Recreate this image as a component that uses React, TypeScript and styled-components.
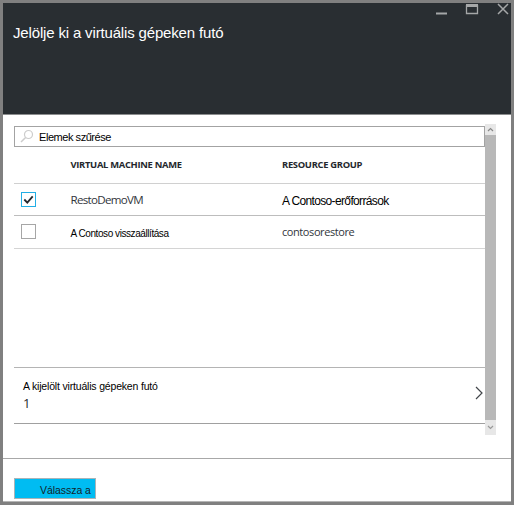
import React from 'react';
import styled, { createGlobalStyle, css } from 'styled-components';

const GlobalStyle = createGlobalStyle`
  *, *::before, *::after { box-sizing: border-box; }
  body { margin: 0; background: #fff; overflow: hidden; }
`;

const sans = '"Liberation Sans", Arial, sans-serif';
const humanist = '"Open Sans", "Noto Sans", sans-serif';

const Blade = styled.section`
  display: flex;
  flex-direction: column;
  width: 514px;
  height: 505px;
  border: 3px solid #808080;
  background: #fff;
`;

const Header = styled.header`
  display: flex;
  flex-direction: column;
  height: 112px;
  flex: none;
  background: #292e32;
  border-bottom: 1px solid #8b8d8e;
`;

const WindowControls = styled.div`
  display: flex;
  justify-content: flex-end;
  height: 16px;
  gap: 18px;
  padding-right: 2px;
  svg { display: block; }
`;

const Title = styled.h1`
  margin: 4px 0 0 10px;
  font: 400 15px/20px ${sans};
  letter-spacing: -0.16px;
  color: #fff;
  white-space: nowrap;
`;

const Body = styled.main`
  display: flex;
  height: 344px;
  flex: none;
  padding: 9px 15px 23px 11px;
  border-bottom: 1px solid #a8a8a8;
`;

const Content = styled.div`
  display: flex;
  flex-direction: column;
  flex: 1;
  padding-top: 2px;
`;

const SearchBox = styled.div`
  display: flex;
  align-items: center;
  flex: none;
  height: 21px;
  padding-left: 5px;
  border: 1px solid #a3a3a3;
`;

type TextProps = { $size: number; $spacing?: number; $humanist?: boolean; $shift?: number };

const Text = styled.span<TextProps>`
  display: block;
  font-family: ${p => (p.$humanist ? humanist : sans)};
  font-size: ${p => p.$size}px;
  line-height: 16px;
  letter-spacing: ${p => p.$spacing ?? 0}px;
  padding-top: ${p => p.$shift ?? 0}px;
  color: ${p => (p.$humanist ? '#32363c' : '#000')};
  white-space: nowrap;
`;

const SearchHint = styled(Text)`
  margin-left: 5px;
`;

const Count = styled(Text)`
  color: #24272d;
`;

const gridRow = css`
  display: grid;
  grid-template-columns: 56.5px 211.5px 1fr;
  align-items: center;
  flex: none;
`;

const HeadRow = styled.div`
  ${gridRow}
  height: 37px;
  border-bottom: 1px solid #d0d0d0;
  font: 700 9.4px/16px ${humanist};
  letter-spacing: -0.3px;
  color: #24272d;
  white-space: nowrap;
`;

const Row = styled.div<{ $height: number; $line: string }>`
  ${gridRow}
  height: ${p => p.$height}px;
  border-bottom: 1px solid ${p => p.$line};
`;

const CheckBox = styled.span<{ $on?: boolean }>`
  display: block;
  width: 15px;
  height: 15px;
  margin-left: 7px;
  margin-bottom: ${p => (p.$on ? 0 : 2)}px;
  border: 1px solid ${p => (p.$on ? '#22aee5' : '#a6a6a6')};
  svg { display: block; }
`;

const Summary = styled.div`
  display: flex;
  justify-content: space-between;
  flex: none;
  height: 57px;
  margin-top: 118px;
  padding: 10px 2px 0 9px;
  border-top: 1px solid #b4b4b4;
  border-bottom: 1px solid #a0a0a0;
  svg { display: block; margin-top: 8px; }
`;

const ScrollBar = styled.div`
  display: flex;
  flex-direction: column;
  flex: none;
  width: 11px;
  background: #b8b8b8;
`;

const ScrollButton = styled.div<{ $height: number }>`
  display: flex;
  align-items: center;
  justify-content: center;
  height: ${p => p.$height}px;
  background: #e7e7e7;
`;

const ScrollThumb = styled.div`
  flex: 1;
`;

const Footer = styled.footer`
  flex: 1;
  padding: 19px 0 0 11px;
  border-bottom: 1px solid #b5b5b5;
`;

const SelectButton = styled.button`
  display: block;
  width: 82px;
  height: 21px;
  margin: 0;
  padding: 3px 0 0 25px;
  border: 1px solid #a9b4b8;
  background: #00bcf2;
  font: 400 10.5px/16px ${sans};
  letter-spacing: -0.05px;
  color: #12242c;
  text-align: left;
  white-space: nowrap;
`;

export default function App() {
  return (
    <>
      <GlobalStyle />
      <Blade>
        <Header>
          <WindowControls>
            <svg width="12" height="14" viewBox="0 0 12 14"><path d="M1 10.5h11" stroke="#a5a7a8" strokeWidth="2" /></svg>
            <svg width="14" height="14" viewBox="0 0 14 14"><path d="M1.5 2v8.5h11V2" fill="none" stroke="#a5a7a8" strokeWidth="1.3" /><path d="M1 2.5h12" stroke="#a5a7a8" strokeWidth="3" /></svg>
            <svg width="12" height="14" viewBox="0 0 12 14"><path d="M1 1l10 10M11 1L1 11" stroke="#a5a7a8" strokeWidth="1.5" /></svg>
          </WindowControls>
          <Title>Jelölje ki a virtuális gépeken futó</Title>
        </Header>
        <Body>
          <Content>
            <SearchBox>
              <svg width="14" height="15" viewBox="0 0 14 15"><circle cx="8.5" cy="5.5" r="4" fill="none" stroke="#cccccc" strokeWidth="1.2" /><path d="M5.6 8.5L1 13" stroke="#cccccc" strokeWidth="1.5" /></svg>
              <SearchHint $size={11} $spacing={-0.45} $shift={1}>Elemek szűrése</SearchHint>
            </SearchBox>
            <HeadRow>
              <span />
              <span>VIRTUAL MACHINE NAME</span>
              <span>RESOURCE GROUP</span>
            </HeadRow>
            <Row $height={32} $line="#bdbdbd">
              <CheckBox $on>
                <svg width="13" height="13" viewBox="0 0 13 13"><path d="M2.3 6.5l3 3.1 5.4-6.2" fill="none" stroke="#24272d" strokeWidth="1.8" /></svg>
              </CheckBox>
              <Text $size={11.6} $spacing={-0.72} $humanist>RestoDemoVM</Text>
              <Text $size={12} $spacing={-0.64} $shift={2}>A Contoso-erőforrások</Text>
            </Row>
            <Row $height={33} $line="#d4d4d4">
              <CheckBox />
              <Text $size={10} $spacing={-0.43} $shift={3}>A Contoso visszaállítása</Text>
              <Text $size={11} $spacing={-0.42} $humanist>contosorestore</Text>
            </Row>
            <Summary>
              <div>
                <Text $size={10.5} $spacing={-0.18}>A kijelölt virtuális gépeken futó</Text>
                <Count $size={13} $shift={1} $humanist>1</Count>
              </div>
              <svg width="8" height="14" viewBox="0 0 8 14"><path d="M1 1l6 6-6 6" fill="none" stroke="#42464a" strokeWidth="1.2" /></svg>
            </Summary>
          </Content>
          <ScrollBar>
            <ScrollButton $height={11}>
              <svg width="7" height="5" viewBox="0 0 7 5"><path d="M1 4l2.5-2.5L6 4" fill="none" stroke="#888" strokeWidth="1.2" /></svg>
            </ScrollButton>
            <ScrollThumb />
            <ScrollButton $height={15}>
              <svg width="7" height="5" viewBox="0 0 7 5"><path d="M1 1l2.5 2.5L6 1" fill="none" stroke="#999" strokeWidth="1.2" /></svg>
            </ScrollButton>
          </ScrollBar>
        </Body>
        <Footer>
          <SelectButton type="button">Válassza a</SelectButton>
        </Footer>
      </Blade>
    </>
  );
}
